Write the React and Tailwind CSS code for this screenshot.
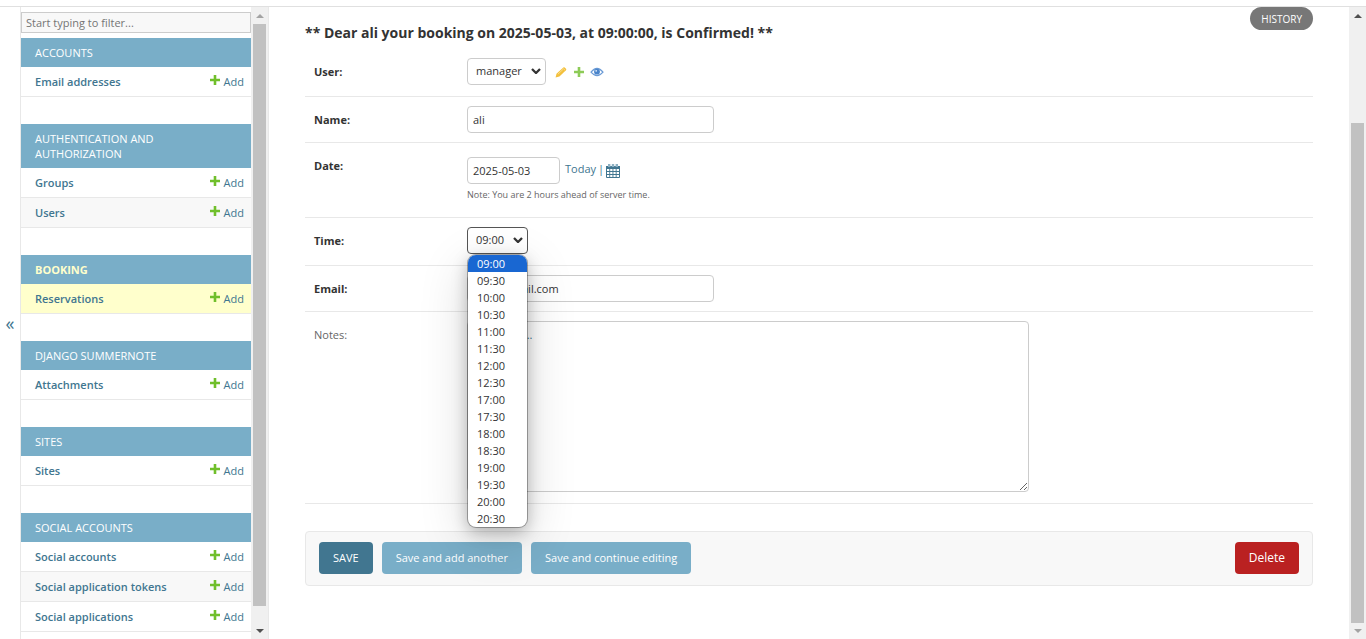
import React from "react";

const sections = [
  { title: "ACCOUNTS", items: ["Email addresses"] },
  { title: "AUTHENTICATION AND AUTHORIZATION", items: ["Groups", "Users"] },
  { title: "BOOKING", items: ["Reservations"], current: true },
  { title: "DJANGO SUMMERNOTE", items: ["Attachments"] },
  { title: "SITES", items: ["Sites"] },
  {
    title: "SOCIAL ACCOUNTS",
    items: ["Social accounts", "Social application tokens", "Social applications"],
  },
];

const times = [
  "09:00", "09:30", "10:00", "10:30", "11:00", "11:30", "12:00", "12:30",
  "17:00", "17:30", "18:00", "18:30", "19:00", "19:30", "20:00", "20:30",
];

const field = "h-[27px] rounded border bg-white text-[11px] text-[#333] outline-none";

function Plus({ className }) {
  return (
    <svg viewBox="0 0 10 10" className={className} fill="currentColor" aria-hidden="true">
      <path d="M3.700 0h2.600v3.700H10v2.600H6.300V10H3.700V6.300H0V3.700h3.700z" />
    </svg>
  );
}

function Arrow({ down, className }) {
  return (
    <svg viewBox="0 0 8 4" className={className} fill="currentColor" aria-hidden="true">
      <path d={down ? "M0 0h8L4 4z" : "M0 4h8L4 0z"} />
    </svg>
  );
}

function Chevron() {
  return (
    <svg viewBox="0 0 10 6" className="pointer-events-none absolute top-[10px] right-[5px] h-[6px] w-[10px]" fill="none" stroke="#333" strokeWidth="2.3" aria-hidden="true">
      <path d="M1 1l4 4 4-4" />
    </svg>
  );
}

function Row({ label, htmlFor, muted, className, children }) {
  return (
    <div className={`flex border-b border-[#e8e8e8] pl-[9px] ${className}`}>
      <label
        htmlFor={htmlFor}
        className={`w-[153px] shrink-0 pt-[6px] leading-4 ${muted ? "text-[#666]" : "font-bold text-[#333]"}`}
      >
        {label}
      </label>
      <div className="min-w-0 flex-1">{children}</div>
    </div>
  );
}

function Sidebar() {
  return (
    <nav className="w-[230px] shrink-0 overflow-hidden pt-[5px]" aria-label="Sidebar">
      <input
        type="search"
        aria-label="Filter navigation items"
        placeholder="Start typing to filter..."
        className="block h-[21px] w-full border border-[#ccc] bg-[#f8f8f8] px-1 text-[11px] outline-none placeholder:text-[#757575]"
      />
      <div className="flex flex-col gap-[27px] pt-[5px]">
        {sections.map((s) => (
          <table key={s.title} className="w-full border-separate border-spacing-0">
            <caption className="bg-[#79aec8] px-[14px] py-[7px] text-left text-[11px] leading-[15px] text-white">
              <a href="#section" className={`block w-[150px] ${s.current ? "font-bold text-[#ffc]" : ""}`}>
                {s.title}
              </a>
            </caption>
            <tbody>
              {s.items.map((item, i) => (
                <tr
                  key={item}
                  className={`h-[30px] text-[#417690] ${
                    s.current ? "bg-[#ffc]" : i % 2 ? "bg-[#f8f8f8]" : "bg-white"
                  }`}
                >
                  <th scope="row" className="border-b border-[#e8e8e8] py-0 pl-[14px] text-left leading-4 font-semibold">
                    <a href="#model">{item}</a>
                  </th>
                  <td className="border-b border-[#e8e8e8] py-0 pr-[7px] leading-4">
                    <a href="#add" className="flex items-center justify-end gap-1">
                      <Plus className="mb-[3px] size-[10px] text-[#70bf2b]" />
                      Add
                    </a>
                  </td>
                </tr>
              ))}
            </tbody>
          </table>
        ))}
      </div>
    </nav>
  );
}

export default function App() {
  return (
    <div className="flex h-screen flex-col overflow-hidden bg-white pt-[6px] font-['Open_Sans','Noto_Sans',sans-serif] text-[11px] text-[#333]">
      <div className="flex min-h-0 flex-1 border-t border-[#e0e0e0]">
        <button
          type="button"
          aria-label="Toggle navigation"
          className="w-[21px] shrink-0 border-r border-[#e8e8e8] text-[18px] text-[#417690]"
        >
          «
        </button>
        <Sidebar />
        <div className="flex w-[18px] shrink-0 flex-col items-center border-r border-[#e8e8e8] bg-[#f0f0f0]" aria-hidden="true">
          <div className="flex h-[17px] items-center">
            <Arrow className="h-1 w-2 text-[#a3a3a3]" />
          </div>
          <div className="w-[13px] flex-1 bg-[#c1c1c1]" />
          <div className="flex h-[33px] items-end pb-[6px]">
            <Arrow down className="h-1 w-2 text-[#505050]" />
          </div>
        </div>

        <main className="min-w-0 flex-1 pr-9 pl-9">
          <div className="flex h-[42px] items-start justify-between">
            <h2 className="pt-4 text-[14px] leading-5 font-bold">
              ** Dear ali your booking on 2025-05-03, at 09:00:00, is Confirmed! **
            </h2>
            <a href="#history" className="rounded-full bg-[#777] px-[11px] pt-px text-[10px] leading-[22px] text-white">
              HISTORY
            </a>
          </div>

          <form>
            <Row label="User:" htmlFor="user" className="pt-[9px] pb-[11px]">
              <div className="flex items-center">
                <div className="relative">
                  <select id="user" className={`${field} w-[79px] appearance-none border-[#ccc] pl-2`}>
                    <option>manager</option>
                  </select>
                  <Chevron />
                </div>
                <a href="#edit" aria-label="Change selected user" className="ml-[9px]">
                  <svg viewBox="0 0 12 12" className="size-3" aria-hidden="true">
                    <path d="M.600 11.400L1.500 7.700L8.300 1.500q.7-.6 1.400 0L11 2.800q.6.700 0 1.400L4.400 10.600z" fill="#f3c03c" />
                    <path d="M2.900 8.200L8 3.400M7.900 2.200l2.400 2.400" stroke="#fae3a2" strokeWidth=".8" />
                  </svg>
                </a>
                <a href="#add" aria-label="Add another user" className="ml-[7px]">
                  <Plus className="size-[10px] text-[#8dcb57]" />
                </a>
                <a href="#view" aria-label="View selected user" className="ml-[6px]">
                  <svg viewBox="0 0 14 10" className="h-[10px] w-[14px]" aria-hidden="true">
                    <path d="M1 5.200Q4 1.300 7 1.300T13 5.200Q10 8.700 7 8.700T1 5.200z" fill="none" stroke="#6b9bd6" strokeWidth="1.200" />
                    <circle cx="7" cy="4.700" r="2.900" fill="#4a84ca" />
                    <circle cx="6.200" cy="3.800" r=".9" fill="#dce9f7" />
                  </svg>
                </a>
              </div>
            </Row>
            <Row label="Name:" htmlFor="name" className="py-[9px]">
              <input id="name" type="text" defaultValue="ali" className={`${field} block w-[247px] border-[#ccc] px-[5px]`} />
            </Row>
            <Row label="Date:" htmlFor="date" className="pt-[9px] pb-[15px]">
              <div className="flex items-center pt-[5px]">
                <input id="date" type="text" defaultValue="2025-05-03" className={`${field} w-[93px] border-[#ccc] px-[5px]`} />
                <span className="flex items-center gap-[2px] pb-[2px] pl-[5px] text-[#417690]">
                  <a href="#today">Today</a>
                  <span>|</span>
                  <a href="#calendar" aria-label="Choose a date" className="pt-[2px]">
                    <svg viewBox="0 0 14 14" className="size-[14px]" aria-hidden="true">
                      <path d="M0 2h14v11q0 1-1 1H1q-1 0-1-1z" fill="#417690" />
                      <path d="M1 5h2.300v2H1zM4.200 5h2.300v2H4.200zM7.400 5h2.300v2H7.400zM10.600 5h2.400v2h-2.400zM1 8h2.300v2H1zM4.200 8h2.300v2H4.200zM7.400 8h2.300v2H7.400zM10.600 8h2.400v2h-2.400zM1 11h2.300v2H1zM4.200 11h2.300v2H4.200zM7.400 11h2.300v2H7.400zM10.600 11h2.400v2h-2.400z" fill="#fff" />
                      <path d="M2 0h2.400v3H2zM5.800 0h2.400v3H5.800zM9.600 0H12v3H9.600z" fill="#8db0c2" />
                    </svg>
                  </a>
                </span>
              </div>
              <p className="pt-1 text-[9px] leading-[14px] text-[#666]">Note: You are 2 hours ahead of server time.</p>
            </Row>
            <Row label="Time:" htmlFor="time" className="pt-[9px] pb-[11px]">
              <div className="relative w-[61px]">
                <select id="time" className={`${field} block w-full appearance-none border-[#555] pl-2`}>
                  {times.map((t) => (
                    <option key={t}>{t}</option>
                  ))}
                </select>
                <Chevron />
                <ul
                  role="listbox"
                  aria-label="Time options"
                  className="absolute top-7 left-px z-10 w-[59px] overflow-hidden rounded-lg bg-white shadow-[0_0_0_1px_rgba(0,0,0,0.3),0_5px_16px_rgba(0,0,0,0.25),0_12px_50px_rgba(0,0,0,0.16)]"
                >
                  {times.map((t, i) => (
                    <li
                      key={t}
                      role="option"
                      aria-selected={i === 0}
                      className={`pl-[9px] leading-[17px] ${i === 0 ? "bg-[#1967d2] text-white" : ""}`}
                    >
                      {t}
                    </li>
                  ))}
                </ul>
              </div>
            </Row>
            <Row label="Email:" htmlFor="email" className="py-[9px]">
              <input id="email" type="email" defaultValue="ali@hotmail.com" className={`${field} block w-[247px] border-[#ccc] px-[5px]`} />
            </Row>
            <Row label="Notes:" htmlFor="notes" muted className="pt-[9px] pb-[11px]">
              <textarea
                id="notes"
                defaultValue="Comment..."
                className="block h-[171px] w-[562px] max-w-full resize rounded border border-[#ccc] px-[5px] py-[5px] leading-4 text-[#417690] outline-none"
              />
            </Row>

            <div className="mt-[27px] flex gap-[9px] rounded border border-[#e8e8e8] bg-[#f8f8f8] px-[13px] pt-[10px] pb-[11px] leading-8 text-white">
              <button type="submit" className="rounded bg-[#417690] px-[14px]">SAVE</button>
              <button type="button" className="rounded bg-[#79aec8] px-[14px]">Save and add another</button>
              <button type="button" className="rounded bg-[#79aec8] px-[14px]">Save and continue editing</button>
              <a href="#delete" className="ml-auto rounded bg-[#ba2121] px-[14px] text-[12px]">Delete</a>
            </div>
          </form>
        </main>

        <div className="flex w-[17px] shrink-0 flex-col items-center bg-[#f0f0f0]" aria-hidden="true">
          <div className="flex h-[116px] items-start pt-[7px]">
            <Arrow className="h-1 w-2 text-[#505050]" />
          </div>
          <div className="w-[13px] flex-1 bg-[#c1c1c1]" />
          <div className="flex h-4 items-end pb-[6px]">
            <Arrow down className="h-1 w-2 text-[#a3a3a3]" />
          </div>
        </div>
      </div>
    </div>
  );
}
